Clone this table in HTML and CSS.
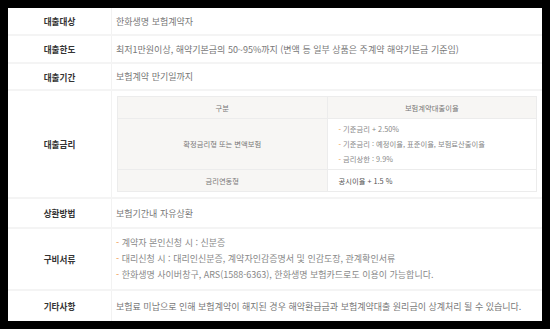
FILE: index.html
```html
<!DOCTYPE html>
<html lang="ko">
<head>
<meta charset="utf-8">
<link rel="stylesheet" href="styles.css">
</head>
<body>
<div class="box">
<table class="info">
  <tr class="r1"><th>대출대상</th><td>한화생명 보험계약자</td></tr>
  <tr class="r2"><th>대출한도</th><td>최저1만원이상, 해약기본금의 50~95%까지 (변액 등 일부 상품은 주계약 해약기본금 기준임)</td></tr>
  <tr class="r3"><th>대출기간</th><td>보험계약 만기일까지</td></tr>
  <tr class="r4"><th>대출금리</th><td class="inner-cell">
    <table class="rate">
      <tr class="h"><th>구분</th><th>보험계약대출이율</th></tr>
      <tr class="b1"><th>확정금리형 또는 변액보험</th><td>
        <ul class="dash small">
          <li>기준금리 + 2.50%</li>
          <li>기준금리 : 예정이율, 표준이율, 보험료산출이율</li>
          <li>금리상한 : 9.9%</li>
        </ul>
      </td></tr>
      <tr class="b2"><th>금리연동형</th><td class="dark">공시이율 + 1.5 %</td></tr>
    </table>
  </td></tr>
  <tr class="r5"><th>상환방법</th><td>보험기간내 자유상환</td></tr>
  <tr class="r6"><th>구비서류</th><td>
    <ul class="dash">
      <li>계약자 본인신청 시 : 신분증</li>
      <li>대리신청 시 : 대리인신분증, 계약자인감증명서 및 인감도장, 관계확인서류</li>
      <li>한화생명 사이버창구, ARS(1588-6363), 한화생명 보험카드로도 이용이 가능합니다.</li>
    </ul>
  </td></tr>
  <tr class="r7"><th>기타사항</th><td>보험료 미납으로 인해 보험계약이 해지된 경우 해약환급금과 보험계약대출 원리금이 상계처리 될 수 있습니다.</td></tr>
</table>
</div>
</body>
</html>
```
FILE: styles.css
```css
html, body {
  margin: 0;
  background: #000;
}
body {
  padding: 8px;
  font-family: "Noto Sans CJK KR", "Noto Sans", sans-serif;
}
.box {
  width: 534px;
  height: 313px;
  background: #fff;
}
.info {
  width: 100%;
  border-collapse: collapse;
  table-layout: fixed;
}
.info > tbody > tr > th,
.info > tbody > tr > td {
  border-top: 2px solid #f4f4f4;
  padding: 0;
  vertical-align: middle;
}
.info > tbody > tr:first-child > th,
.info > tbody > tr:first-child > td {
  border-top: none;
}
.info > tbody > tr > th {
  width: 103px;
  border-right: 1px solid #f2f2f2;
  font-size: 8.6px;
  font-weight: bold;
  color: #333;
  text-align: center;
}
.info > tbody > tr > td {
  padding-left: 4px;
  font-size: 9px;
  color: #777;
  text-align: left;
}
.r1 { height: 27px; }
.r2 { height: 28px; }
.r3 { height: 27px; }
.r4 { height: 108px; }
.r5 { height: 30px; }
.r6 { height: 62px; }
.r7 { height: 31px; }
.r7 td { color: #555; }

.info > tbody > tr > td.inner-cell {
  padding: 0 6px 0 4px;
}
.rate {
  margin-left: 1px;
  width: 420px;
  border-collapse: collapse;
  table-layout: fixed;
  font-size: 7.3px;
}
.rate th, .rate td {
  border: 1px solid #ececec;
  padding: 0;
  font-weight: normal;
  vertical-align: middle;
}
.rate th {
  width: 168px;
  background: #f7f6f4;
  color: #777;
  text-align: center;
}
.rate tr.h { height: 22px; }
.rate tr.b1 { height: 51px; }
.rate tr.b2 { height: 22px; }
.rate td {
  padding-left: 11px;
  color: #888;
  text-align: left;
}
.rate td.dark { color: #555; }

.dash {
  list-style: none;
  margin: 0;
  padding: 0;
}
.dash li {
  line-height: 16px;
  color: #888;
}
.dash li::before {
  content: "- ";
  color: #f0913c;
}
.dash.small li {
  line-height: 15px;
}
```
